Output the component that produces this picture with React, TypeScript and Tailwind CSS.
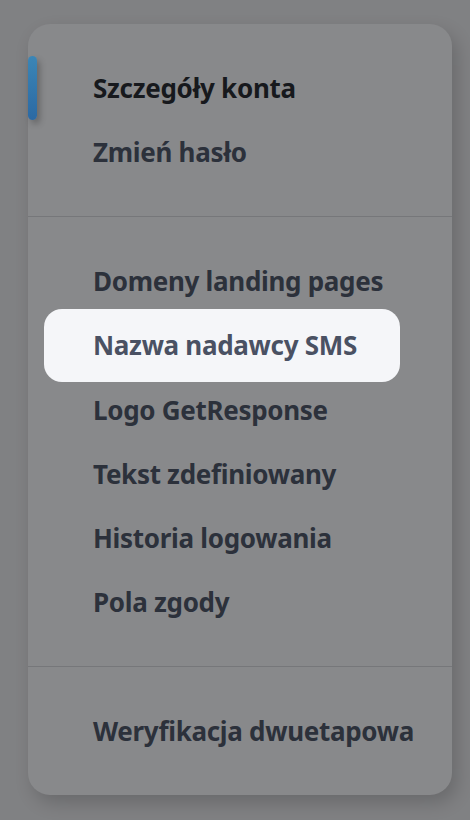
import React from 'react';

type Item = { label: string; active?: boolean; highlighted?: boolean };

const sections: Item[][] = [
  [{ label: 'Szczegóły konta', active: true }, { label: 'Zmień hasło' }],
  [
    { label: 'Domeny landing pages' },
    { label: 'Nazwa nadawcy SMS', highlighted: true },
    { label: 'Logo GetResponse' },
    { label: 'Tekst zdefiniowany' },
    { label: 'Historia logowania' },
    { label: 'Pola zgody' },
  ],
  [{ label: 'Weryfikacja dwuetapowa' }],
];

const NavItem: React.FC<{ item: Item }> = ({ item }) => {
  if (item.highlighted) {
    return (
      <div className="relative z-10 -my-1 mx-4 flex h-[73px] w-[356px] items-center rounded-[18px] bg-[#f5f6f9] pl-[49px] text-[#4a5163]">
        {item.label}
      </div>
    );
  }
  return (
    <div className="relative flex h-16 items-center pl-[65px]">
      {item.active && (
        <span className="absolute left-0 top-0 h-16 w-[9px] rounded-full bg-gradient-to-b from-[#3b86b6] to-[#2c69a3] shadow-[3px_4px_6px_rgba(0,0,0,0.25)]" />
      )}
      <span className={item.active ? 'text-[#17191d]' : 'text-[#2c313b]'}>{item.label}</span>
    </div>
  );
};

export default function App() {
  return (
    <div className="min-h-[820px] w-[470px] bg-[#808183] pt-6" style={{ fontFamily: '"Noto Sans", "Open Sans", sans-serif' }}>
      <div className="ml-7 w-[424px] rounded-[22px] bg-[#88898b] text-[26px] font-bold tracking-[-0.3px] shadow-[5px_8px_18px_rgba(0,0,0,0.18)]">
        {sections.map((items, i) => (
          <div key={i} className={i > 0 ? 'border-t border-[#76777a] py-8' : 'py-8'}>
            {items.map((item) => (
              <NavItem key={item.label} item={item} />
            ))}
          </div>
        ))}
      </div>
    </div>
  );
}
